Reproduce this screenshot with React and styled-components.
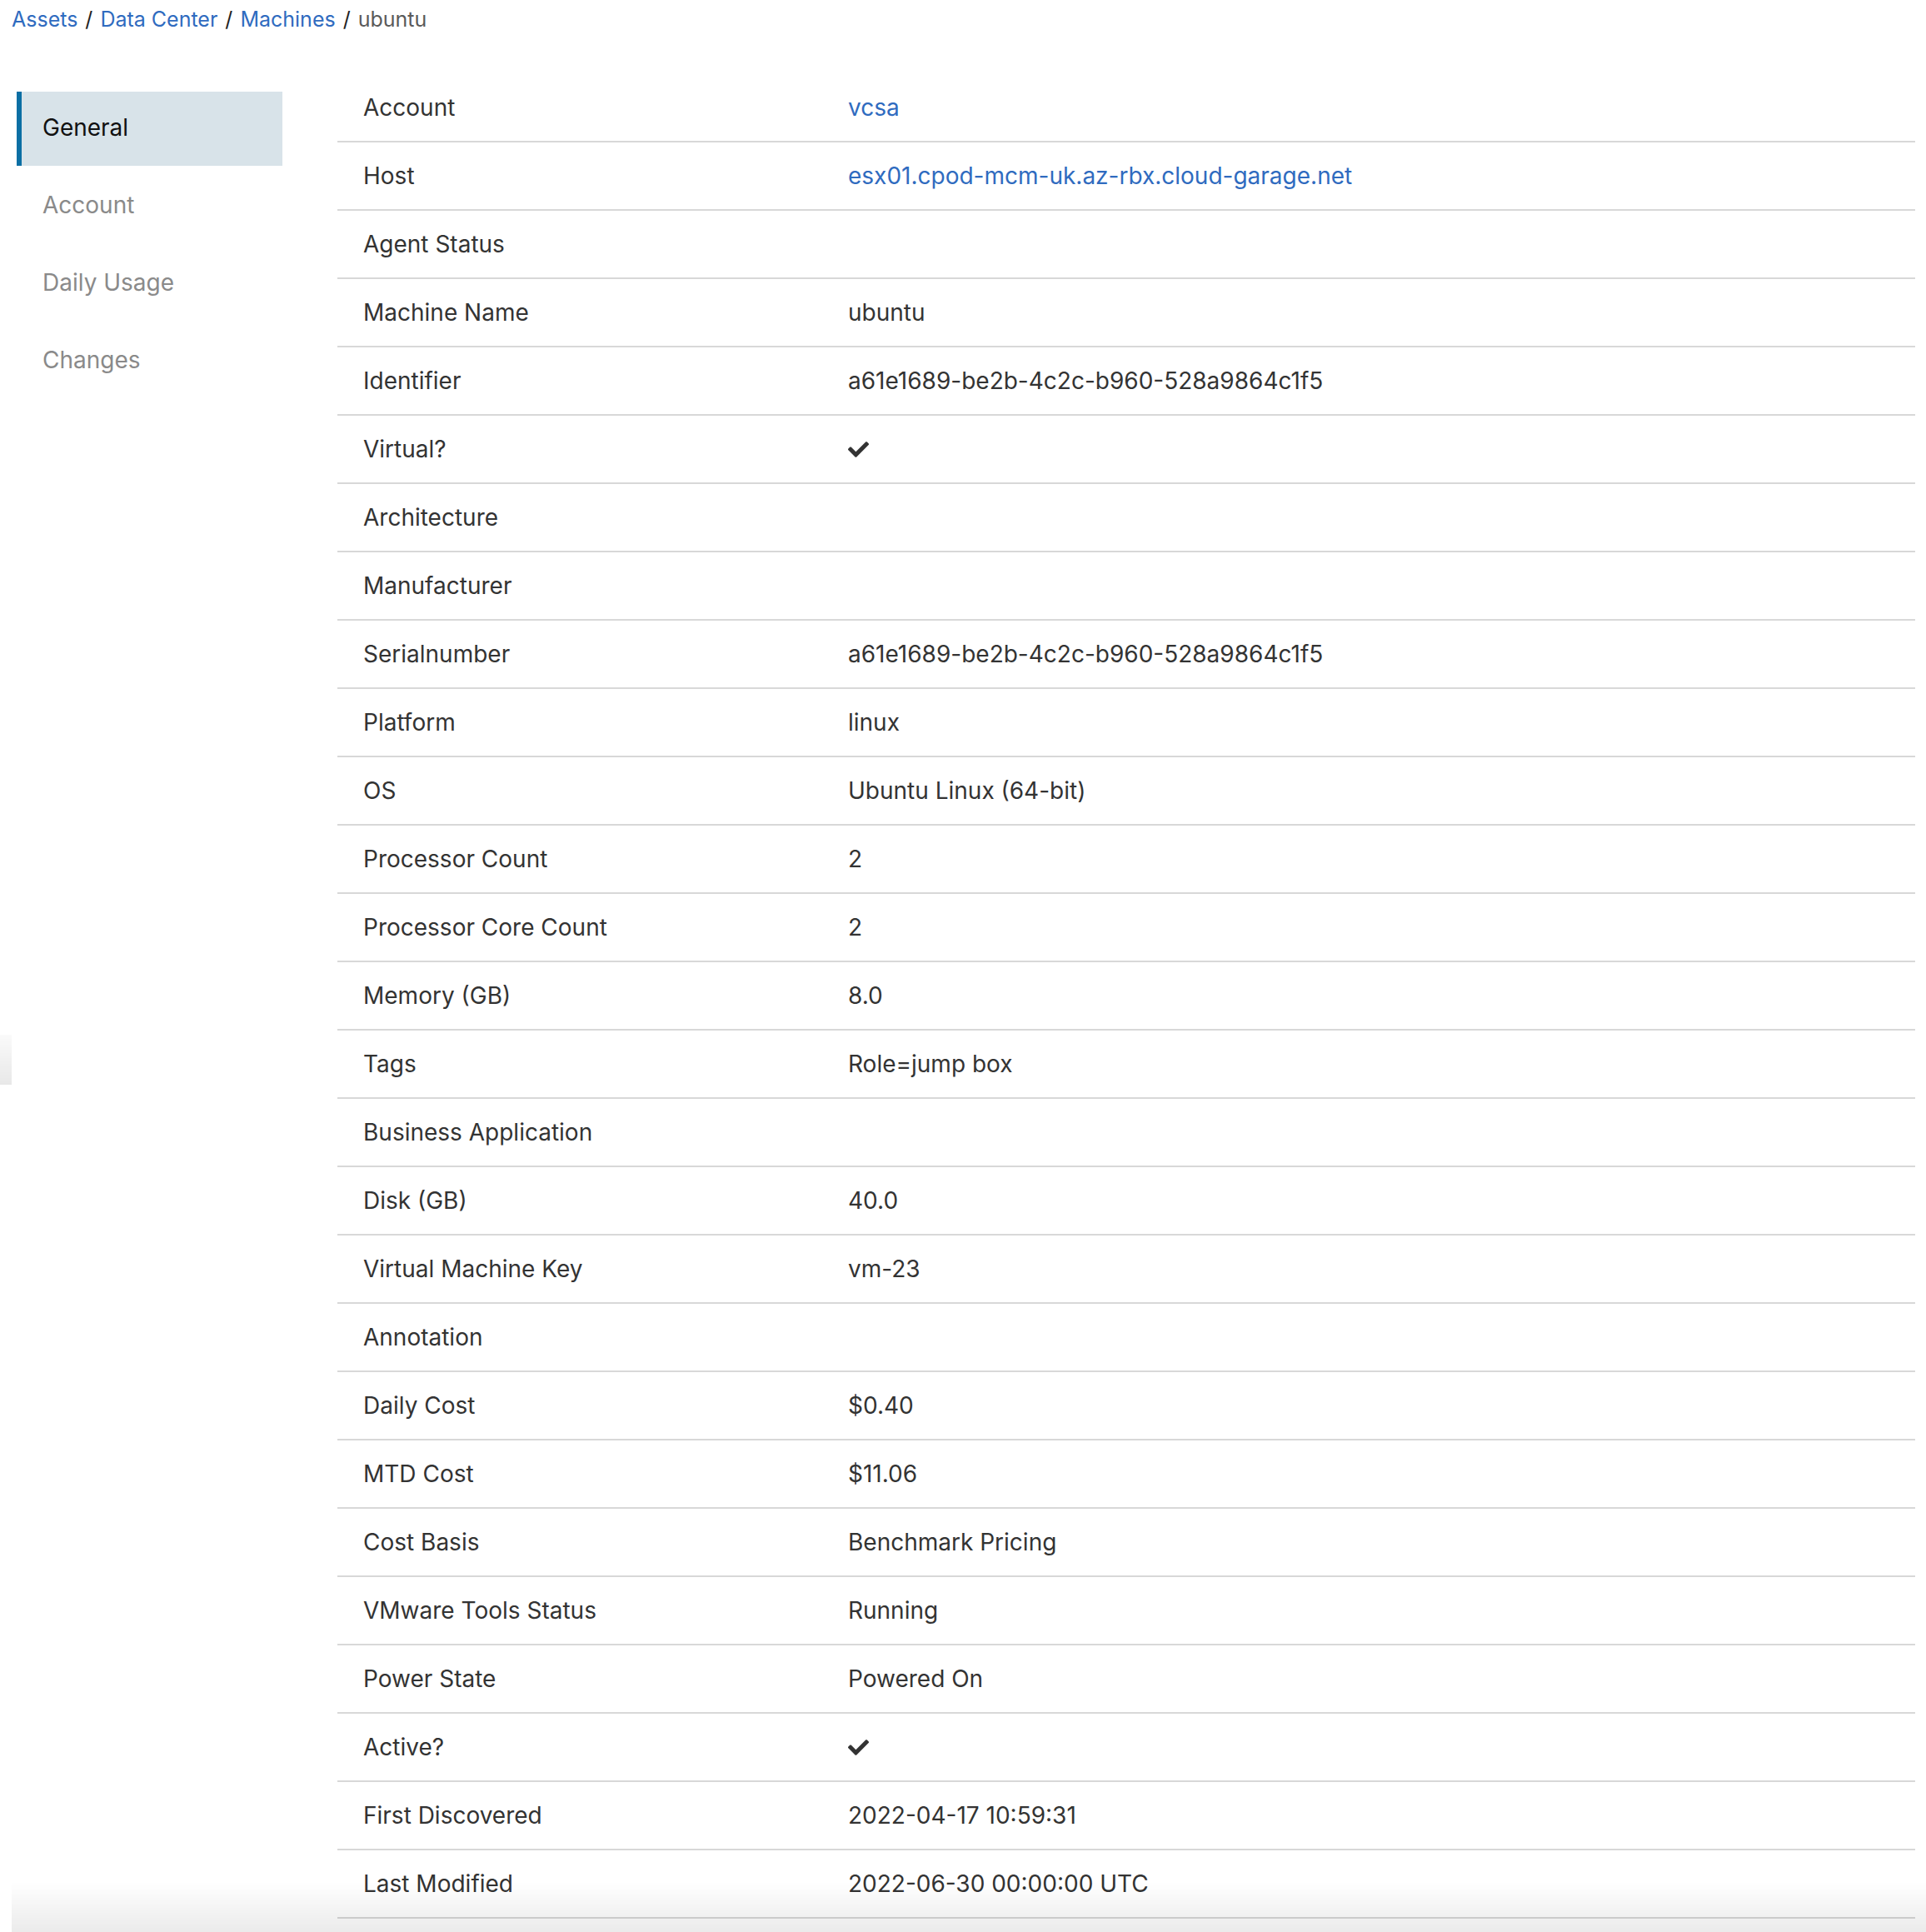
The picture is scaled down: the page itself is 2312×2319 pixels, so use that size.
import React from "react";
import styled, { createGlobalStyle } from "styled-components";
import { FaCheck } from "react-icons/fa";

const GlobalStyle = createGlobalStyle`
  body {
    margin: 0;
    background: #fff;
    font-family: Inter, "Open Sans", sans-serif;
    color: #333;
  }
`;

const Page = styled.div`
  padding: 0 13px 0 0;
`;

const Breadcrumb = styled.div`
  padding: 8px 14px 0;
  font-size: 25px;
  line-height: 30px;
  color: #333;
`;

const Crumb = styled.a`
  color: #2f6bbf;
  text-decoration: none;
`;

const Sep = styled.span`
  margin: 0 9px;
  color: #222;
`;

const Current = styled.span`
  color: #5a5a5a;
`;

const Layout = styled.div`
  display: flex;
  align-items: flex-start;
  margin-top: 51px;
`;

const SideNav = styled.nav`
  width: 319px;
  flex-shrink: 0;
  margin: 21px 0 0 20px;
  display: flex;
  flex-direction: column;
  gap: 4px;
`;

const NavItem = styled.div`
  height: 89px;
  box-sizing: border-box;
  display: flex;
  align-items: center;
  padding: 0 0 3px 25px;
  font-size: 28px;
  border-left: 6px solid ${(p) => (p.$active ? "#0b6fa4" : "transparent")};
  background: ${(p) => (p.$active ? "#d8e3e9" : "transparent")};
  color: ${(p) => (p.$active ? "#111" : "#8a8a8a")};
`;

const Table = styled.div`
  flex: 1;
  margin-left: 66px;
`;

const Row = styled.div`
  display: grid;
  grid-template-columns: 582px 1fr;
  align-items: center;
  height: 80px;
  border-bottom: 2px solid #d8d8d8;
  font-size: 28px;
`;

const Cell = styled.div`
  padding-left: 31px;
  color: #333;
`;

const Link = styled.a`
  color: #2f6bbf;
  text-decoration: none;
`;

const Check = styled(FaCheck)`
  display: block;
  width: 25px;
  height: 25px;
  color: #333;
`;

const BottomShade = styled.div`
  position: fixed;
  left: 14px;
  right: 0;
  bottom: 0;
  height: 60px;
  pointer-events: none;
  background: linear-gradient(rgba(0, 0, 0, 0), rgba(0, 0, 0, 0.08));
`;

const EdgeShade = styled.div`
  position: fixed;
  left: 0;
  top: 1242px;
  width: 14px;
  height: 60px;
  pointer-events: none;
  background: linear-gradient(rgba(0, 0, 0, 0.02), rgba(0, 0, 0, 0.09));
`;

const nav = ["General", "Account", "Daily Usage", "Changes"];

// value kinds: plain text, { href } link, { check } tick
const rows = [
  ["Account", { href: "vcsa" }],
  ["Host", { href: "esx01.cpod-mcm-uk.az-rbx.cloud-garage.net" }],
  ["Agent Status", ""],
  ["Machine Name", "ubuntu"],
  ["Identifier", "a61e1689-be2b-4c2c-b960-528a9864c1f5"],
  ["Virtual?", { check: true }],
  ["Architecture", ""],
  ["Manufacturer", ""],
  ["Serialnumber", "a61e1689-be2b-4c2c-b960-528a9864c1f5"],
  ["Platform", "linux"],
  ["OS", "Ubuntu Linux (64-bit)"],
  ["Processor Count", "2"],
  ["Processor Core Count", "2"],
  ["Memory (GB)", "8.0"],
  ["Tags", "Role=jump box"],
  ["Business Application", ""],
  ["Disk (GB)", "40.0"],
  ["Virtual Machine Key", "vm-23"],
  ["Annotation", ""],
  ["Daily Cost", "$0.40"],
  ["MTD Cost", "$11.06"],
  ["Cost Basis", "Benchmark Pricing"],
  ["VMware Tools Status", "Running"],
  ["Power State", "Powered On"],
  ["Active?", { check: true }],
  ["First Discovered", "2022-04-17 10:59:31"],
  ["Last Modified", "2022-06-30 00:00:00 UTC"],
];

const renderValue = (v) => {
  if (typeof v === "string") return v;
  if (v.href) return <Link href="#">{v.href}</Link>;
  if (v.check) return <Check />;
  return null;
};

export default function App() {
  return (
    <Page>
      <GlobalStyle />
      <Breadcrumb>
        <Crumb href="#">Assets</Crumb>
        <Sep>/</Sep>
        <Crumb href="#">Data Center</Crumb>
        <Sep>/</Sep>
        <Crumb href="#">Machines</Crumb>
        <Sep>/</Sep>
        <Current>ubuntu</Current>
      </Breadcrumb>
      <Layout>
        <SideNav>
          {nav.map((n, i) => (
            <NavItem key={n} $active={i === 0}>
              {n}
            </NavItem>
          ))}
        </SideNav>
        <Table>
          {rows.map(([label, value]) => (
            <Row key={label}>
              <Cell>{label}</Cell>
              <Cell>{renderValue(value)}</Cell>
            </Row>
          ))}
        </Table>
      </Layout>
      <EdgeShade />
      <BottomShade />
    </Page>
  );
}
